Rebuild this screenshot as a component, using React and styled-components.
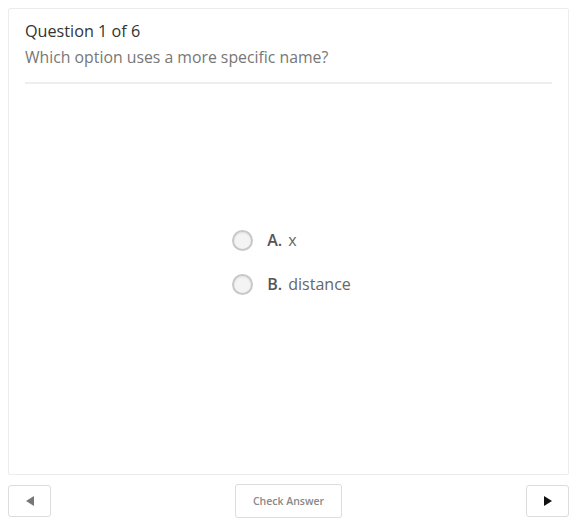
import React, { useState } from "react";
import styled, { createGlobalStyle } from "styled-components";

const GlobalStyle = createGlobalStyle`
  html, body {
    margin: 0;
    padding: 0;
    background: #fff;
    font-family: "Open Sans", "Liberation Sans", sans-serif;
  }
`;

const options = [
  { key: "A", label: "x" },
  { key: "B", label: "distance" },
];

const App = () => {
  const [selected, setSelected] = useState(null);

  return (
    <Page>
      <GlobalStyle />
      <Card>
        <Header>
          <Title>Question 1 of 6</Title>
          <Prompt>Which option uses a more specific name?</Prompt>
        </Header>
        <Body>
          <Options>
            {options.map((opt) => (
              <Option key={opt.key} onClick={() => setSelected(opt.key)}>
                <Radio checked={selected === opt.key} />
                <OptionText>
                  <b>{opt.key}.</b> {opt.label}
                </OptionText>
              </Option>
            ))}
          </Options>
        </Body>
      </Card>
      <Footer>
        <NavButton aria-label="Previous" disabled>
          <svg width="12" height="12" viewBox="0 0 12 12">
            <path d="M10 1 L2 6 L10 11 Z" fill="#777" />
          </svg>
        </NavButton>
        <CheckButton>Check Answer</CheckButton>
        <NavButton aria-label="Next">
          <svg width="12" height="12" viewBox="0 0 12 12">
            <path d="M2 1 L10 6 L2 11 Z" fill="#111" />
          </svg>
        </NavButton>
      </Footer>
    </Page>
  );
};

export default App;

// Styled Components
const Page = styled.div`
  width: 578px;
  height: 522px;
  box-sizing: border-box;
  padding: 8px 9px 4px 8px;
  display: flex;
  flex-direction: column;
`;

const Card = styled.div`
  height: 469px;
  box-sizing: border-box;
  border: 1px solid #ececec;
  border-radius: 2px;
  padding: 0 16px;
  display: flex;
  flex-direction: column;
`;

const Header = styled.div`
  padding: 11px 0 10px;
  border-bottom: 2px solid #eeeeee;
`;

const Title = styled.div`
  font-size: 16.2px;
  font-weight: 500;
  color: #333;
  line-height: 22px;
`;

const Prompt = styled.div`
  font-size: 15.8px;
  color: #777;
  line-height: 30px;
`;

const Body = styled.div`
  flex: 1;
  display: flex;
  justify-content: center;
  align-items: flex-start;
  padding: 144px 0 0 6px;
`;

const Options = styled.div`
  display: flex;
  flex-direction: column;
  align-items: flex-start;
  gap: 20px;
`;

const Option = styled.label`
  display: flex;
  align-items: center;
  gap: 14px;
  cursor: pointer;
`;

const Radio = styled.span`
  width: 21px;
  height: 21px;
  box-sizing: border-box;
  border-radius: 50%;
  border: 2px solid #c8c8c8;
  background: ${(p) => (p.checked ? "#7a7a7a" : "#f4f4f4")};
  box-shadow: inset 0 1px 2px rgba(0, 0, 0, 0.08);
`;

const OptionText = styled.span`
  font-size: 16px;
  color: #666;
  line-height: 24px;

  b {
    font-weight: 600;
    color: #555;
    margin-right: 2px;
  }
`;

const Footer = styled.div`
  display: flex;
  justify-content: space-between;
  align-items: center;
  padding-top: 9px;
`;

const NavButton = styled.button`
  width: 43px;
  height: 32px;
  box-sizing: border-box;
  border: 1px solid #dcdcdc;
  border-radius: 3px;
  background: #fff;
  display: flex;
  align-items: center;
  justify-content: center;
  cursor: pointer;
  padding: 0;
`;

const CheckButton = styled.button`
  width: 107px;
  height: 34px;
  box-sizing: border-box;
  border: 1px solid #dcdcdc;
  border-radius: 3px;
  background: #fff;
  font-family: "Open Sans", "Liberation Sans", sans-serif;
  font-size: 10.5px;
  font-weight: 600;
  color: #888;
  cursor: pointer;
`;
